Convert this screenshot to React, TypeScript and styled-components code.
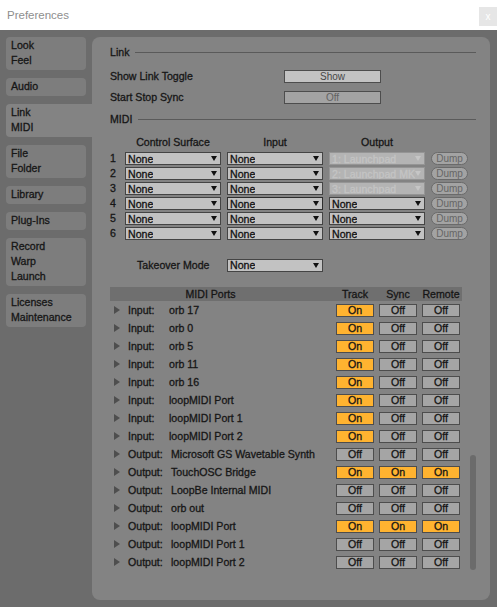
import React from 'react'
import styled, { createGlobalStyle, css } from 'styled-components'

const GlobalStyle = createGlobalStyle`
  body {
    margin: 0;
    font-family: "Liberation Sans", Arial, sans-serif;
  }
`

const COLORS = {
  body: '#6c6c6c',
  panel: '#838383',
  tab: '#7d7d7d',
  text: '#161616',
  line: '#5a5a5a',
  field: '#c2c2c2',
  orange: '#ffb330',
  off: '#a5a5a5',
}

const Window = styled.div`
  width: 497px;
  height: 607px;
  display: flex;
  flex-direction: column;
  background: ${COLORS.body};
`

const TitleBar = styled.div`
  height: 30px;
  background: #fff;
  display: flex;
  align-items: center;
  justify-content: space-between;
  padding-left: 7px;
  font-size: 11.5px;
  color: #8e8e8e;
  box-sizing: border-box;
`

const CloseButton = styled.div`
  width: 18px;
  height: 19px;
  margin-top: 3px;
  background: #e6e6e6;
  color: #fff;
  font-size: 10px;
  display: flex;
  align-items: center;
  justify-content: center;
`

const Body = styled.div`
  flex: 1;
  display: flex;
  padding: 7px 7px 7px 6px;
  color: ${COLORS.text};
  font-size: 10.6px;
  -webkit-text-stroke: 0.3px currentColor;
`

const Sidebar = styled.div`
  width: 80px;
  display: flex;
  flex-direction: column;
  gap: 8px;
`

const Tab = styled.div<{ $active?: boolean }>`
  background: ${COLORS.tab};
  border-radius: 4px;
  padding: 1px 5px 2px;
  line-height: 15px;
  ${(p) =>
    p.$active &&
    css`
      background: ${COLORS.panel};
      margin-right: -6px;
      border-radius: 4px 0 0 4px;
    `}
`

const Panel = styled.div`
  flex: 1;
  margin-left: 6px;
  background: ${COLORS.panel};
  border-radius: 8px;
  padding: 8px 14px 0 18px;
  position: relative;
`

const Heading = styled.div`
  height: 14px;
  display: flex;
  align-items: center;
  gap: 6px;
  &::after {
    content: '';
    flex: 1;
    height: 1px;
    background: ${COLORS.line};
  }
`

const SettingRow = styled.div<{ $top: number }>`
  height: 14px;
  margin-top: ${(p) => p.$top}px;
  display: flex;
  align-items: center;
`

const SettingLabel = styled.div`
  width: 174px;
`

const FlatButton = styled.div<{ $dim?: boolean }>`
  width: 97px;
  height: 13px;
  box-sizing: border-box;
  border: 1px solid #4d4d4d;
  background: ${(p) => (p.$dim ? '#a3a3a3' : '#c3c3c3')};
  color: ${(p) => (p.$dim ? '#626262' : '#474747')};
  -webkit-text-stroke: 0;
  display: flex;
  align-items: center;
  justify-content: center;
  font-size: 10px;
`

const MidiGrid = styled.div`
  display: grid;
  grid-template-columns: 9px 96px 96px 96px 37px;
  column-gap: 6px;
  margin-top: 9px;
`

const ColHead = styled.div`
  height: 16px;
  text-align: center;
  line-height: 14px;
`

const RowNum = styled.div`
  height: 15px;
  line-height: 15px;
`

const Select = styled.div<{ $disabled?: boolean; $focus?: boolean }>`
  height: 13px;
  margin: 1px 0;
  box-sizing: border-box;
  border: 1px solid ${(p) => (p.$disabled ? '#959595' : p.$focus ? '#2e2e2e' : '#444')};
  background: ${(p) => (p.$disabled ? '#b4b4b4' : COLORS.field)};
  color: ${(p) => (p.$disabled ? '#c4c4c4' : '#111')};
  display: flex;
  align-items: center;
  justify-content: space-between;
  padding: 0 3px 0 2px;
  font-size: 10.6px;
  overflow: hidden;
  white-space: nowrap;
  &::after {
    content: '';
    flex-shrink: 0;
    border-top: 5px solid ${(p) => (p.$disabled ? '#c6c6c6' : '#111')};
    border-left: 3.5px solid transparent;
    border-right: 3.5px solid transparent;
  }
`

const SelectText = styled.span`
  overflow: hidden;
`

const Dump = styled.div`
  height: 13px;
  margin: 1px 0;
  box-sizing: border-box;
  border: 1px solid #6a6a6a;
  border-radius: 7px;
  background: #a3a3a3;
  color: #666;
  -webkit-text-stroke: 0;
  font-size: 10px;
  display: flex;
  align-items: center;
  justify-content: center;
`

const TakeoverRow = styled.div`
  margin-top: 17px;
  height: 14px;
  display: flex;
  align-items: center;
`

const TakeoverLabel = styled.div`
  width: 90px;
  padding-left: 27px;
`

const TakeoverSelect = styled(Select)`
  width: 96px;
`

const Table = styled.div`
  margin-top: 15px;
  width: 352px;
`

const TableRow = styled.div<{ $header?: boolean }>`
  display: grid;
  grid-template-columns: 221px 38px 38px 38px;
  column-gap: 5px;
  align-items: center;
  height: ${(p) => (p.$header ? 14 : 18)}px;
  ${(p) =>
    p.$header &&
    css`
      background: #6f6f6f;
      text-align: center;
    `}
`

const HeaderName = styled.div`
  padding-right: 20px;
`

const PortCell = styled.div`
  display: flex;
  align-items: center;
  padding-left: 4px;
  white-space: nowrap;
`

const Arrow = styled.span`
  width: 0;
  height: 0;
  border-left: 6px solid #4e4e4e;
  border-top: 4px solid transparent;
  border-bottom: 4px solid transparent;
  margin-right: 8px;
`

const PortKind = styled.span<{ $w: number }>`
  width: ${(p) => p.$w}px;
`

const Toggle = styled.div<{ $on: boolean }>`
  height: 13px;
  box-sizing: border-box;
  border: 1px solid #4d4d4d;
  background: ${(p) => (p.$on ? COLORS.orange : COLORS.off)};
  color: #151515;
  font-size: 10.6px;
  display: flex;
  align-items: center;
  justify-content: center;
`

const ScrollThumb = styled.div`
  position: absolute;
  right: 14px;
  bottom: 30px;
  width: 6px;
  height: 115px;
  border-radius: 3px;
  background: #6b6b6b;
`

const tabs = [
  ['Look', 'Feel'],
  ['Audio'],
  ['Link', 'MIDI'],
  ['File', 'Folder'],
  ['Library'],
  ['Plug-Ins'],
  ['Record', 'Warp', 'Launch'],
  ['Licenses', 'Maintenance'],
]

const outputs = ['1: Launchpad', '2: Launchpad MK', '3: Launchpad', 'None', 'None', 'None']

type Port = { kind: 'Input' | 'Output'; name: string; on: [boolean, boolean, boolean] }

const ports: Port[] = [
  { kind: 'Input', name: 'orb 17', on: [true, false, false] },
  { kind: 'Input', name: 'orb 0', on: [true, false, false] },
  { kind: 'Input', name: 'orb 5', on: [true, false, false] },
  { kind: 'Input', name: 'orb 11', on: [true, false, false] },
  { kind: 'Input', name: 'orb 16', on: [true, false, false] },
  { kind: 'Input', name: 'loopMIDI Port', on: [true, false, false] },
  { kind: 'Input', name: 'loopMIDI Port 1', on: [true, false, false] },
  { kind: 'Input', name: 'loopMIDI Port 2', on: [true, false, false] },
  { kind: 'Output', name: 'Microsoft GS Wavetable Synth', on: [false, false, false] },
  { kind: 'Output', name: 'TouchOSC Bridge', on: [true, true, true] },
  { kind: 'Output', name: 'LoopBe Internal MIDI', on: [false, false, false] },
  { kind: 'Output', name: 'orb out', on: [false, false, false] },
  { kind: 'Output', name: 'loopMIDI Port', on: [true, true, true] },
  { kind: 'Output', name: 'loopMIDI Port 1', on: [false, false, false] },
  { kind: 'Output', name: 'loopMIDI Port 2', on: [false, false, false] },
]

export default function App() {
  return (
    <Window>
      <GlobalStyle />
      <TitleBar>
        Preferences
        <CloseButton>x</CloseButton>
      </TitleBar>
      <Body>
        <Sidebar>
          {tabs.map((lines) => (
            <Tab key={lines[0]} $active={lines[0] === 'Link'}>
              {lines.map((l) => (
                <div key={l}>{l}</div>
              ))}
            </Tab>
          ))}
        </Sidebar>
        <Panel>
          <Heading>Link</Heading>
          <SettingRow $top={10}>
            <SettingLabel>Show Link Toggle</SettingLabel>
            <FlatButton>Show</FlatButton>
          </SettingRow>
          <SettingRow $top={7}>
            <SettingLabel>Start Stop Sync</SettingLabel>
            <FlatButton $dim>Off</FlatButton>
          </SettingRow>
          <SettingRow $top={8} as={Heading}>
            MIDI
          </SettingRow>

          <MidiGrid>
            <div />
            <ColHead>Control Surface</ColHead>
            <ColHead>Input</ColHead>
            <ColHead>Output</ColHead>
            <div />
            {outputs.map((out, i) => (
              <React.Fragment key={i}>
                <RowNum>{i + 1}</RowNum>
                <Select>
                  <SelectText>None</SelectText>
                </Select>
                <Select $focus={i === 3}>
                  <SelectText>None</SelectText>
                </Select>
                <Select $disabled={i < 3}>
                  <SelectText>{out}</SelectText>
                </Select>
                <Dump>Dump</Dump>
              </React.Fragment>
            ))}
          </MidiGrid>

          <TakeoverRow>
            <TakeoverLabel>Takeover Mode</TakeoverLabel>
            <TakeoverSelect>
              <SelectText>None</SelectText>
            </TakeoverSelect>
          </TakeoverRow>

          <Table>
            <TableRow $header>
              <HeaderName>MIDI Ports</HeaderName>
              <div>Track</div>
              <div>Sync</div>
              <div>Remote</div>
            </TableRow>
            {ports.map((p, i) => (
              <TableRow key={i}>
                <PortCell>
                  <Arrow />
                  <PortKind $w={p.kind === 'Input' ? 41 : 43}>{p.kind}:</PortKind>
                  {p.name}
                </PortCell>
                {p.on.map((on, j) => (
                  <Toggle key={j} $on={on}>
                    {on ? 'On' : 'Off'}
                  </Toggle>
                ))}
              </TableRow>
            ))}
          </Table>
          <ScrollThumb />
        </Panel>
      </Body>
    </Window>
  )
}
